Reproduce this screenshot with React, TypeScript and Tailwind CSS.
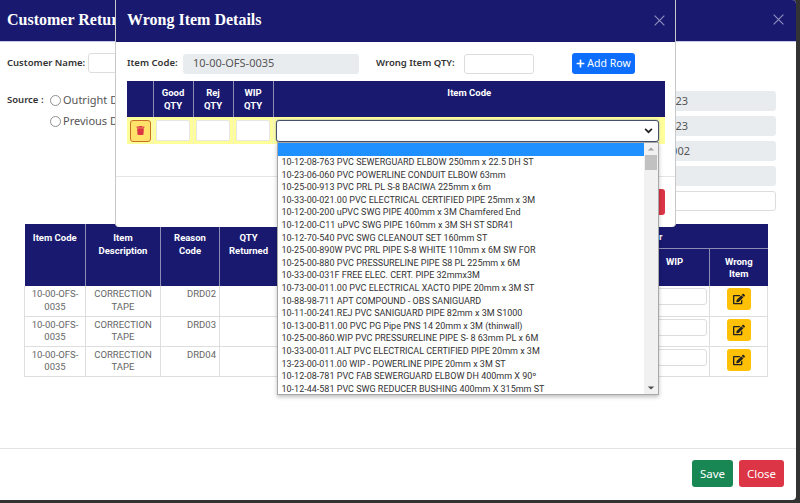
import React from "react";
import { FaEdit, FaPlus, FaTrash } from "react-icons/fa";

const options = [
  "10-12-08-763 PVC SEWERGUARD ELBOW 250mm x 22.5 DH ST",
  "10-23-06-060 PVC POWERLINE CONDUIT ELBOW 63mm",
  "10-25-00-913 PVC PRL PL S-8 BACIWA 225mm x 6m",
  "10-33-00-021.00 PVC ELECTRICAL CERTIFIED PIPE 25mm x 3M",
  "10-12-00-200 uPVC SWG PIPE 400mm x 3M Chamfered End",
  "10-12-00-C11 uPVC SWG PIPE 160mm x 3M SH ST SDR41",
  "10-12-70-540 PVC SWG CLEANOUT SET 160mm ST",
  "10-25-00-890W PVC PRL PIPE S-8 WHITE 110mm x 6M SW FOR",
  "10-25-00-880 PVC PRESSURELINE PIPE S8 PL 225mm x 6M",
  "10-33-00-031F FREE ELEC. CERT. PIPE 32mmx3M",
  "10-73-00-011.00 PVC ELECTRICAL XACTO PIPE 20mm x 3M ST",
  "10-88-98-711 APT COMPOUND - OBS SANIGUARD",
  "10-11-00-241.REJ PVC SANIGUARD PIPE 82mm x 3M S1000",
  "10-13-00-B11.00 PVC PG Pipe PNS 14 20mm x 3M (thinwall)",
  "10-25-00-860.WIP PVC PRESSURELINE PIPE S- 8 63mm PL x 6M",
  "10-33-00-011.ALT PVC ELECTRICAL CERTIFIED PIPE 20mm x 3M",
  "13-23-00-011.00 WIP - POWERLINE PIPE 20mm x 3M ST",
  "10-12-08-781 PVC FAB SEWERGUARD ELBOW DH 400mm X 90º",
  "10-12-44-581 PVC SWG REDUCER BUSHING 400mm X 315mm ST",
];

const rows = ["DRD02", "DRD03", "DRD04"];

const CloseX = ({ className }: { className: string }) => (
  <svg viewBox="0 0 16 16" className={className} fill="none" stroke="currentColor" strokeWidth="1.4">
    <path d="M2 2l12 12M14 2L2 14" />
  </svg>
);

const Radio = ({ label }: { label: string }) => (
  <div className="flex h-[21px] items-center">
    <span className="h-[11px] w-[11px] rounded-full border border-[#8f8f8f] bg-white" />
    <span className="ml-[2px] whitespace-nowrap text-[#555]">{label}</span>
  </div>
);

const WrongItemModal = () => (
  <div className="absolute left-[115px] top-0 z-10 flex h-[227px] w-[561px] flex-col rounded-b-[4px] border-x border-[#c9c9c9] bg-white">
    <div className="flex h-[42px] shrink-0 items-center justify-between bg-[#191970] pb-[2px] pl-[11px] pr-[9px]">
      <h5 className="font-['Liberation_Serif',serif] text-[16px] font-bold text-white">Wrong Item Details</h5>
      <CloseX className="h-[13px] w-[13px] text-[#8f8fc0]" />
    </div>
    <div className="h-[135px] shrink-0 border-b border-[#e5e5e5] pl-[11px] pr-[10px] pt-[11px]">
      <div className="flex h-[21px] items-center">
        <label className="w-[56px] font-semibold text-[#333]">Item Code:</label>
        <div className="flex h-[20px] w-[176px] items-center rounded-[3px] bg-[#e9ecef] pl-[10px] text-[11px] text-[#555]">10-00-OFS-0035</div>
        <label className="ml-[17px] w-[88px] font-semibold text-[#333]">Wrong Item QTY:</label>
        <div className="h-[20px] w-[70px] rounded-[3px] border border-[#ddd] bg-white" />
        <button className="ml-[38px] flex h-[21px] w-[63px] items-center justify-center gap-[2px] rounded-[3px] bg-[#0d6efd] text-[10.5px] text-white">
          <FaPlus className="h-[9px] w-[9px]" />
          Add Row
        </button>
      </div>
      <table className="mt-[7px] w-[538px] table-fixed border-collapse">
        <thead>
          <tr className="h-[36px] bg-[#191970] font-['Roboto',sans-serif] text-[9.5px] font-bold leading-[12.5px] text-white">
            <th className="w-[26px] border-r border-[#8c8cb5]" />
            <th className="w-[40px] border-r border-[#8c8cb5] pt-[6px] align-top">Good<br />QTY</th>
            <th className="w-[40px] border-r border-[#8c8cb5] pt-[6px] align-top">Rej<br />QTY</th>
            <th className="w-[40px] border-r border-[#8c8cb5] pt-[6px] align-top">WIP<br />QTY</th>
            <th className="pt-[6px] align-top">Item Code</th>
          </tr>
        </thead>
        <tbody>
          <tr className="h-[27px] bg-[#ffff99]">
            <td className="border-r border-[#f3f3c0] pl-[3px]">
              <button className="flex h-[22px] w-[21px] items-center justify-center rounded-[3px] border border-[#c8702a] bg-[#ffe26a]">
                <FaTrash className="h-[9px] w-[9px] text-[#dc3545]" />
              </button>
            </td>
            {[0, 1, 2].map((i) => (
              <td key={i} className="border-r border-[#f3f3c0] px-[2.5px]">
                <div className="h-[21px] rounded-[2px] border border-[#e6e6e6] bg-white" />
              </td>
            ))}
            <td className="relative pl-[2px] pr-[6px]">
              <div className="flex h-[22px] items-center justify-end rounded-[3px] border border-[#46506e] bg-white pr-[5px] shadow-[0_0_2px_#7f8fb0]">
                <svg viewBox="0 0 16 16" className="h-[9px] w-[9px]" fill="none" stroke="#222" strokeWidth="3">
                  <path d="M2 5l6 6 6-6" />
                </svg>
              </div>
              <div className="absolute left-[3px] top-[25px] z-20 flex h-[253px] w-[382px] border border-[#a8a8a8] bg-white shadow-[0_2px_4px_rgba(0,0,0,0.25)]">
                <div className="min-w-0 flex-1">
                  <div className="h-[13px] bg-[#1e90ff]" />
                  <ul className="font-['Roboto',sans-serif]">
                    {options.map((o) => (
                      <li key={o} className="h-[12.6px] whitespace-nowrap pl-[4px] text-[9px] leading-[12.6px] text-[#333]">{o}</li>
                    ))}
                  </ul>
                </div>
                <div className="flex w-[14px] shrink-0 flex-col items-center bg-[#f1f1f1]">
                  <svg viewBox="0 0 10 10" className="mt-[2px] h-[8px] w-[8px] fill-[#a3a3a3]"><path d="M1 7h8L5 3z" /></svg>
                  <div className="mt-[2px] h-[15px] w-[12px] bg-[#c1c1c1]" />
                  <svg viewBox="0 0 10 10" className="mb-[2px] mt-auto h-[8px] w-[8px] fill-[#505050]"><path d="M1 3h8L5 7z" /></svg>
                </div>
              </div>
            </td>
          </tr>
        </tbody>
      </table>
    </div>
    <div className="flex flex-1 justify-end pr-[10px] pt-[12px]">
      <button className="h-[26px] w-[45px] rounded-[3px] bg-[#dc3545]" aria-label="Close" />
    </div>
  </div>
);

export default function App() {
  return (
    <div className="h-[503px] w-[800px] overflow-hidden bg-[#333] font-['Noto_Sans',sans-serif] text-[9.5px]">
      <div className="relative flex h-[500px] w-[796px] flex-col rounded-r-[4px] bg-white">
        <div className="flex h-[42px] shrink-0 items-center justify-between rounded-tr-[4px] border-b border-[#c8c8e8] bg-[#191970] pb-[2px] pl-[7px] pr-[11px]">
          <h5 className="font-['Liberation_Serif',serif] text-[16px] font-bold text-white">Customer Return</h5>
          <CloseX className="h-[13px] w-[13px] text-[#8f8fc0]" />
        </div>

        <div className="min-h-0 flex-1">
          <div className="flex h-[182px] justify-between pl-[7px] pr-[20px]">
            <div className="pt-[11px]">
              <div className="flex h-[20px] items-center">
                <label className="w-[81px] font-semibold text-[#333]">Customer Name:</label>
                <div className="h-[20px] w-[120px] rounded-[3px] border border-[#ddd]" />
              </div>
              <div className="mt-[17px] flex">
                <label className="w-[43px] pt-[3px] font-semibold text-[#333]">Source :</label>
                <div className="text-[11px]">
                  <Radio label="Outright Delivery" />
                  <Radio label="Previous Delivery" />
                </div>
              </div>
            </div>
            <div className="flex flex-col gap-[5px] pt-[49px] text-[11px] text-[#555]">
              <div className="flex h-[20px] w-[176px] items-center justify-end rounded-[3px] bg-[#e9ecef] pr-[88px]">23</div>
              <div className="flex h-[20px] w-[176px] items-center justify-end rounded-[3px] bg-[#e9ecef] pr-[88px]">23</div>
              <div className="flex h-[20px] w-[176px] items-center justify-end rounded-[3px] bg-[#e9ecef] pr-[86px]">002</div>
              <div className="h-[20px] w-[176px] rounded-[3px] bg-[#e9ecef]" />
              <div className="h-[20px] w-[176px] rounded-[3px] border border-[#ddd] bg-white" />
            </div>
          </div>

          <table className="ml-[24px] w-[743px] table-fixed border-collapse">
            <colgroup>
              <col className="w-[61px]" />
              <col className="w-[75px]" />
              <col className="w-[59px]" />
              <col className="w-[58px]" />
              <col className="w-[181px]" />
              <col className="w-[181px]" />
              <col className="w-[70px]" />
              <col className="w-[58px]" />
            </colgroup>
            <thead className="bg-[#191970] font-['Roboto',sans-serif] text-[9.5px] font-bold leading-[12.5px] text-white">
              <tr className="h-[24px]">
                <th rowSpan={2} className="border-r border-[#8c8cb5] pt-[8px] align-top">Item Code</th>
                <th rowSpan={2} className="border-r border-[#8c8cb5] pt-[8px] align-top">Item<br />Description</th>
                <th rowSpan={2} className="border-r border-[#8c8cb5] pt-[8px] align-top">Reason<br />Code</th>
                <th rowSpan={2} className="border-r border-[#8c8cb5] pt-[8px] align-top">QTY<br />Returned</th>
                <th colSpan={4} className="border-b border-[#8c8cb5] pr-[105px] pt-[2px] text-right">r</th>
              </tr>
              <tr className="h-[38px]">
                <th className="border-r border-[#8c8cb5]" />
                <th className="border-r border-[#8c8cb5]" />
                <th className="border-r border-[#8c8cb5] pt-[7px] align-top">WIP</th>
                <th className="pt-[7px] align-top">Wrong<br />Item</th>
              </tr>
            </thead>
            <tbody className="font-['Roboto',sans-serif] text-[9.5px] leading-[12.5px] text-[#666]">
              {rows.map((r) => (
                <tr key={r} className="h-[30px] border-b border-[#dedede]">
                  <td className="border-x border-[#dedede] text-center">10-00-OFS-<br />0035</td>
                  <td className="border-r border-[#dedede] text-center">CORRECTION<br />TAPE</td>
                  <td className="border-r border-[#dedede] pr-[3px] pt-[2px] text-right align-top">{r}</td>
                  <td className="border-r border-[#dedede]" />
                  <td className="border-r border-[#dedede]" />
                  <td className="border-r border-[#dedede]" />
                  <td className="border-r border-[#dedede] pl-[2px] pr-[2px] pt-[2px] align-top">
                    <div className="h-[17px] rounded-[3px] border border-[#ddd] bg-white" />
                  </td>
                  <td className="border-r border-[#dedede] pt-[2px] align-top">
                    <button className="mx-auto flex h-[22px] w-[24px] items-center justify-center rounded-[3px] bg-[#ffc107]">
                      <FaEdit className="h-[12px] w-[12px] text-[#222]" />
                    </button>
                  </td>
                </tr>
              ))}
            </tbody>
          </table>
        </div>

        <div className="flex h-[52px] shrink-0 items-start justify-end gap-[6px] border-t border-[#e3e3e3] pr-[12px] pt-[11px] text-[11.5px] text-white">
          <button className="h-[27px] w-[41px] rounded-[3px] bg-[#198754]">Save</button>
          <button className="h-[27px] w-[45px] rounded-[3px] bg-[#dc3545]">Close</button>
        </div>

        <WrongItemModal />
      </div>
    </div>
  );
}
